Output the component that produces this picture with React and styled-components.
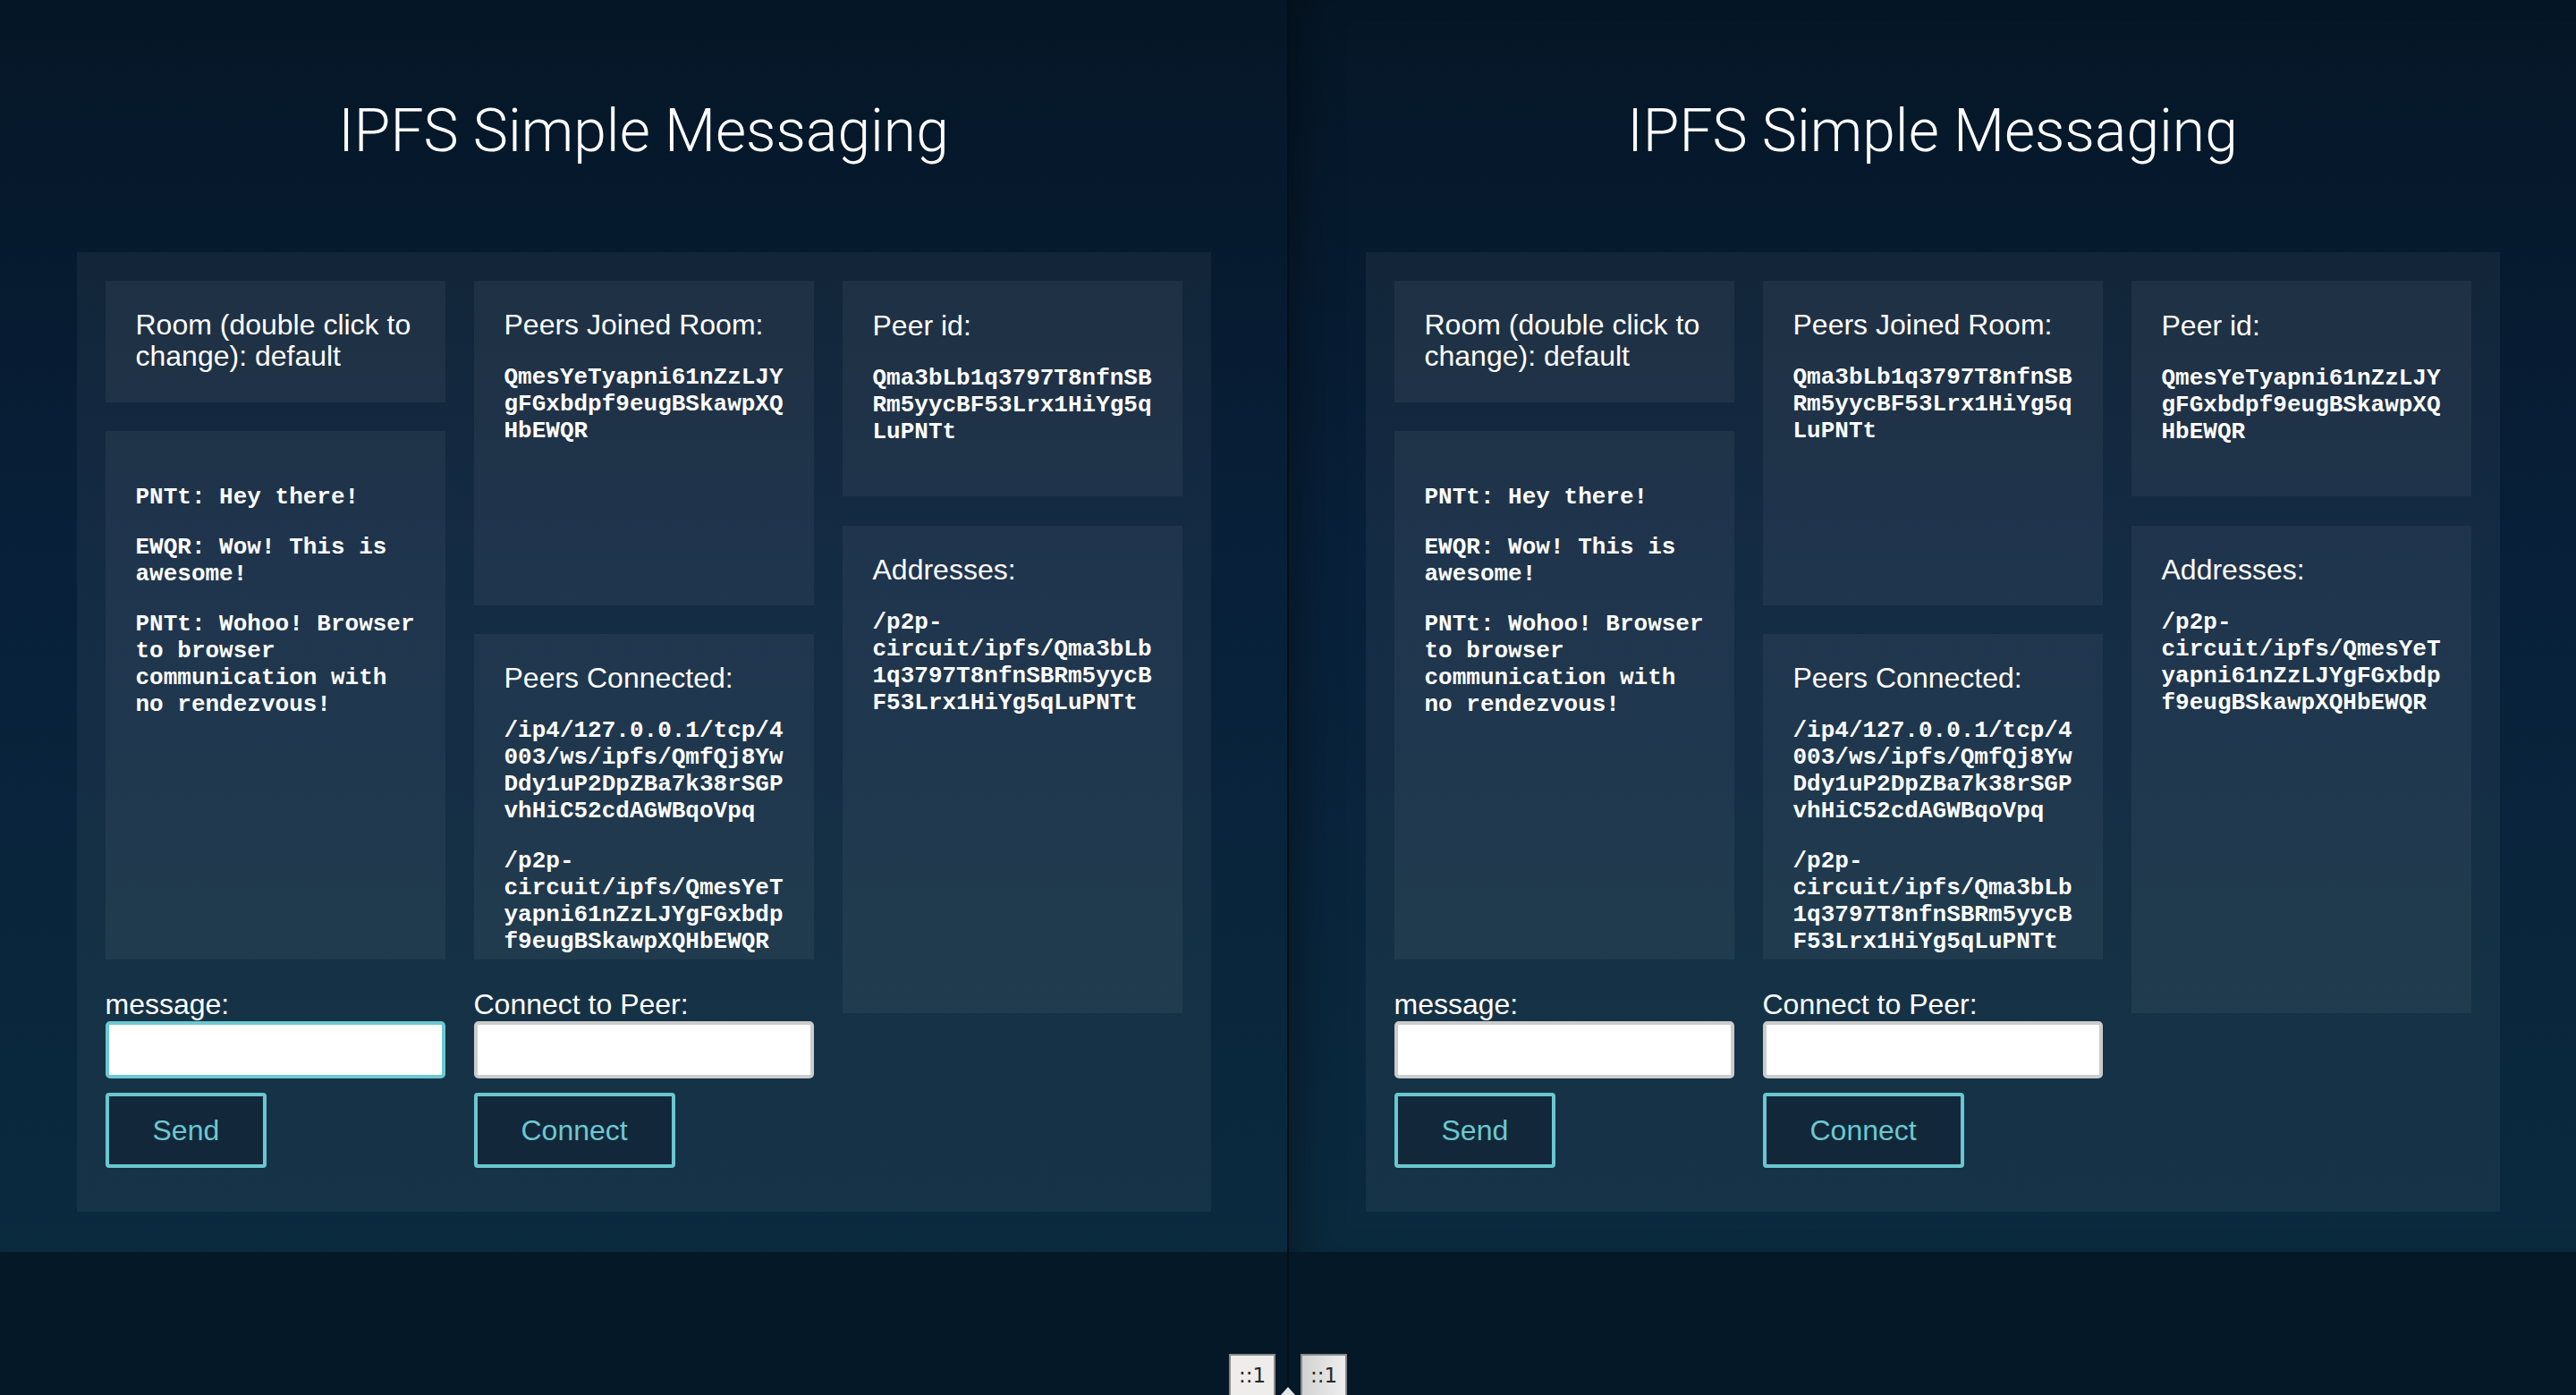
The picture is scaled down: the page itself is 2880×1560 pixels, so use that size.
import React from "react";
import styled, { createGlobalStyle } from "styled-components";

const GlobalStyle = createGlobalStyle`
    html, body {
        margin: 0;
        padding: 0;
        background: #051828;
    }
    body {
        font-family: "Liberation Sans", Arial, sans-serif;
        color: #ffffff;
    }
`

const Screen = styled.div`
    display: flex;
    width: 2880px;
    height: 1560px;
    overflow: hidden;
`

const Column = styled.div`
    flex: 1;
    display: flex;
    flex-direction: column;
    min-width: 0;
`

const Divider = styled.div`
    position: relative;
    width: 2px;
    background: #030f19;

    &::after {
        content: "";
        position: absolute;
        left: -7px;
        bottom: 0;
        width: 0;
        height: 0;
        border-left: 8px solid transparent;
        border-right: 8px solid transparent;
        border-bottom: 9px solid #e4e6e8;
    }
`

const Pane = styled.div`
    height: 1400px;
    display: flex;
    flex-direction: column;
    align-items: center;
    padding-top: 114px;
    box-sizing: border-box;
    background: linear-gradient(to bottom, #051626 0%, #08203a 45%, #0a2a3e 100%);
    box-shadow: ${p => p.$shade ? "inset 40px 0 50px -30px rgba(0, 0, 0, 0.35)" : "none"};
`

const Title = styled.h1`
    margin: 0 0 102px;
    font-family: Roboto, "Liberation Sans", sans-serif;
    font-weight: 300;
    font-size: 66px;
    line-height: 66px;
    color: #ffffff;
`

const Panel = styled.div`
    display: grid;
    grid-template-columns: repeat(3, 380px);
    column-gap: 32px;
    align-items: start;
    padding: 32px 32px 49px;
    background: rgba(255, 255, 255, 0.05);
`

const Stack = styled.div`
    display: flex;
    flex-direction: column;
    gap: ${p => p.$gap || 32}px;
`

const Card = styled.div`
    box-sizing: border-box;
    height: ${p => p.$height ? `${p.$height}px` : "auto"};
    padding: ${p => p.$top || 32}px 32px 32px 34px;
    overflow: hidden;
    background: rgba(255, 255, 255, 0.05);
`

const CardTitle = styled.h3`
    margin: 0;
    font-size: 32px;
    line-height: 35px;
    font-weight: normal;
`

const Mono = styled.p`
    margin: 26px 0;
    font-family: "Liberation Mono", "Courier New", monospace;
    font-weight: bold;
    font-size: 26px;
    line-height: 30px;
    overflow-wrap: break-word;
    color: #ffffff;
`

const Field = styled.div`
    display: flex;
    flex-direction: column;
    align-items: flex-start;
`

const Label = styled.label`
    font-size: 32px;
    line-height: 36px;
    margin-bottom: 1px;
`

const Input = styled.input`
    box-sizing: border-box;
    width: 100%;
    height: 64px;
    margin: 0 0 16px;
    border: 4px solid ${p => p.$focused ? "#6cc8d0" : "#cccccc"};
    border-radius: 5px;
    background: #ffffff;
    outline: none;
`

const Button = styled.button`
    box-sizing: border-box;
    height: 84px;
    padding: 0 49px;
    border: 4px solid #6ac7cf;
    border-radius: 4px;
    background: #12283a;
    color: #6dc8d0;
    font-family: "Liberation Sans", Arial, sans-serif;
    font-size: 32px;
`

const Strip = styled.div`
    flex: 1;
    display: flex;
    align-items: flex-end;
    justify-content: ${p => p.$side === "left" ? "flex-end" : "flex-start"};
    padding: 0 13px;
    background: #051828;
`

const Tab = styled.div`
    box-sizing: border-box;
    width: 52px;
    height: 46px;
    display: flex;
    justify-content: center;
    padding-top: 9px;
    border: 2px solid #8b8b8b;
    border-bottom: none;
    background: ${p => p.$shade ? "linear-gradient(to right, #d2d2d2, #eeeeee)" : "#efedec"};
    color: #262626;
    font-family: "DejaVu Sans", sans-serif;
    font-size: 23px;
    line-height: 26px;
`

const left = {
    messageFocused: true,
    peersJoined: ["QmesYeTyapni61nZzLJYgFGxbdpf9eugBSkawpXQHbEWQR"],
    peersConnected: [
        "/ip4/127.0.0.1/tcp/4003/ws/ipfs/QmfQj8YwDdy1uP2DpZBa7k38rSGPvhHiC52cdAGWBqoVpq",
        "/p2p-circuit/ipfs/QmesYeTyapni61nZzLJYgFGxbdpf9eugBSkawpXQHbEWQR"
    ],
    peerId: "Qma3bLb1q3797T8nfnSBRm5yycBF53Lrx1HiYg5qLuPNTt",
    addresses: ["/p2p-circuit/ipfs/Qma3bLb1q3797T8nfnSBRm5yycBF53Lrx1HiYg5qLuPNTt"]
}

const right = {
    messageFocused: false,
    peersJoined: ["Qma3bLb1q3797T8nfnSBRm5yycBF53Lrx1HiYg5qLuPNTt"],
    peersConnected: [
        "/ip4/127.0.0.1/tcp/4003/ws/ipfs/QmfQj8YwDdy1uP2DpZBa7k38rSGPvhHiC52cdAGWBqoVpq",
        "/p2p-circuit/ipfs/Qma3bLb1q3797T8nfnSBRm5yycBF53Lrx1HiYg5qLuPNTt"
    ],
    peerId: "QmesYeTyapni61nZzLJYgFGxbdpf9eugBSkawpXQHbEWQR",
    addresses: ["/p2p-circuit/ipfs/QmesYeTyapni61nZzLJYgFGxbdpf9eugBSkawpXQHbEWQR"]
}

const messages = [
    "PNTt: Hey there!",
    "EWQR: Wow! This is awesome!",
    "PNTt: Wohoo! Browser to browser communication with no rendezvous!"
]

function Messenger({ data, shade }) {
    return (
        <Pane $shade={shade}>
            <Title>IPFS Simple Messaging</Title>
            <Panel>
                <Stack>
                    <Card $height={136}>
                        <CardTitle>Room (double click to change): default</CardTitle>
                    </Card>
                    <Card $height={591} $top={33}>
                        {messages.map((m, i) => <Mono key={i}>{m}</Mono>)}
                    </Card>
                    <Field>
                        <Label>message:</Label>
                        <Input $focused={data.messageFocused} />
                        <Button>Send</Button>
                    </Field>
                </Stack>
                <Stack>
                    <Card $height={363}>
                        <CardTitle>Peers Joined Room:</CardTitle>
                        {data.peersJoined.map((p, i) => <Mono key={i}>{p}</Mono>)}
                    </Card>
                    <Card $height={364}>
                        <CardTitle>Peers Connected:</CardTitle>
                        {data.peersConnected.map((p, i) => <Mono key={i}>{p}</Mono>)}
                    </Card>
                    <Field>
                        <Label>Connect to Peer:</Label>
                        <Input />
                        <Button>Connect</Button>
                    </Field>
                </Stack>
                <Stack $gap={33}>
                    <Card $height={241} $top={33}>
                        <CardTitle>Peer id:</CardTitle>
                        <Mono>{data.peerId}</Mono>
                    </Card>
                    <Card $height={545}>
                        <CardTitle>Addresses:</CardTitle>
                        {data.addresses.map((a, i) => <Mono key={i}>{a}</Mono>)}
                    </Card>
                </Stack>
            </Panel>
        </Pane>
    )
}

export default function App() {
    return (
        <Screen>
            <GlobalStyle />
            <Column>
                <Messenger data={left} />
                <Strip $side="left">
                    <Tab>::1</Tab>
                </Strip>
            </Column>
            <Divider />
            <Column>
                <Messenger data={right} shade />
                <Strip $side="right">
                    <Tab $shade>::1</Tab>
                </Strip>
            </Column>
        </Screen>
    )
}
